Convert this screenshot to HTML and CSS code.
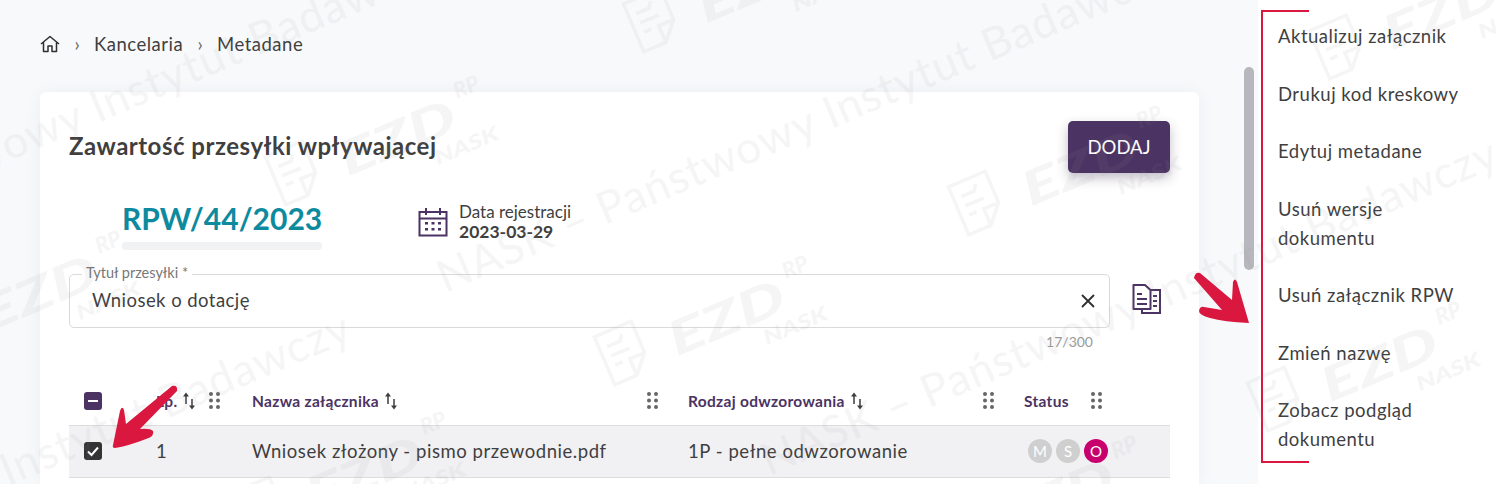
FILE: index.html
```html
<!DOCTYPE html>
<html lang="pl">
    <head>
        <meta charset="UTF-8">
        <meta name="viewport" content="width=device-width, initial-scale=1.0">
        <title>Metadane</title>
        <link rel="stylesheet" href="styles.css">
    </head>
    <body>
        <svg class="defs" width="0" height="0">
            <symbol id="dots" viewBox="0 0 11 17">
                <circle cx="2" cy="2" r="2"/><circle cx="9" cy="2" r="2"/>
                <circle cx="2" cy="8.5" r="2"/><circle cx="9" cy="8.5" r="2"/>
                <circle cx="2" cy="15" r="2"/><circle cx="9" cy="15" r="2"/>
            </symbol>
            <symbol id="sort" viewBox="0 0 14 18">
                <path d="M4 12V3M10 7V15" fill="none" stroke="#3d3d3d" stroke-width="1.500"/>
                <path d="M1 4.500 4 .5l3 4ZM7 13.500l3 4 3-4Z" fill="#3d3d3d"/>
            </symbol>
            <defs>
                <g id="logo">
                    <text class="wm-ezd" transform="translate(-62 66) rotate(-23)" textLength="122" lengthAdjust="spacingAndGlyphs">EZD</text>
                    <text class="wm-rp" transform="translate(3 7) rotate(-23)" textLength="26" lengthAdjust="spacingAndGlyphs">RP</text>
                    <text class="wm-nask" transform="translate(3 65) rotate(-23)" textLength="68" lengthAdjust="spacingAndGlyphs">NASK</text>
                    <g transform="translate(-172 86) rotate(-23)" fill="none" stroke="#999" stroke-width="3.500">
                        <path d="M-20-26H20V8L4 26H-20ZM20 8H4V26M-12-12H2L6-18M-12-2H8M-12 8H-4"/>
                    </g>
                </g>
            </defs>
        </svg>

        <div class="app">
            <main class="content">
                <nav class="crumbs">
                    <svg class="home" viewBox="0 0 20 18" width="20" height="18">
                        <path d="M1 9 10 1.500 19 9M3.500 7.500V16.500H8V11h4v5.500h4.500V7.500" fill="none" stroke="#2f2f2f" stroke-width="1.500" stroke-linejoin="round"/>
                    </svg>
                    <span class="sep">›</span>
                    <a class="crumb">Kancelaria</a>
                    <span class="sep">›</span>
                    <a class="crumb">Metadane</a>
                </nav>

                <section class="card">
                    <header class="card-head">
                        <h1 class="card-title">Zawartość przesyłki wpływającej</h1>
                        <button class="btn-add">DODAJ</button>
                    </header>

                    <div class="meta">
                        <div class="rpw">
                            <div class="rpw-no">RPW/44/2023</div>
                            <div class="rpw-bar"></div>
                        </div>
                        <div class="reg">
                            <svg viewBox="0 0 30 30" width="30" height="30">
                                <path d="M1.500 5H28.500V28.500H1.500ZM1.500 11.500H28.500M8 1V8M22 1V8" fill="none" stroke="#4b3363" stroke-width="2"/>
                                <path d="M7 15h3v2.500H7ZM13.500 15h3v2.500h-3ZM20 15h3v2.500h-3ZM7 21h3v2.500H7ZM13.500 21h3v2.500h-3ZM20 21h3v2.500h-3Z" fill="#4b3363"/>
                            </svg>
                            <div>
                                <div class="reg-label">Data rejestracji</div>
                                <div class="reg-date">2023-03-29</div>
                            </div>
                        </div>
                    </div>

                    <div class="title-row">
                        <div class="field">
                            <span class="field-label">Tytuł przesyłki *</span>
                            <span class="field-value">Wniosek o dotację</span>
                            <svg viewBox="0 0 16 16" width="16" height="16">
                                <path d="M2 2 14 14M14 2 2 14" stroke="#2f2f2f" stroke-width="1.800"/>
                            </svg>
                        </div>
                        <svg class="copy" viewBox="0 0 30 30" width="30" height="30">
                            <path d="M10 6H28V29H10Z" fill="#fff" stroke="#4b3363" stroke-width="2"/>
                            <path d="M21 12H25M21 17H25M21 22H25" stroke="#4b3363" stroke-width="2"/>
                            <path d="M1.500 1H13L18.500 6V25H1.500Z" fill="#fff" stroke="#4b3363" stroke-width="2" stroke-linejoin="round"/>
                            <path d="M5 10H10M5 15H15M5 20H15" stroke="#4b3363" stroke-width="2"/>
                        </svg>
                    </div>
                    <div class="counter">17/300</div>

                    <div class="table">
                        <div class="cell head check-cell"><span class="box box-mixed"></span></div>
                        <div class="cell head lp">
                            <span>Lp.</span>
                            <svg class="sort"><use href="#sort"/></svg>
                            <svg class="dots"><use href="#dots"/></svg>
                        </div>
                        <div class="cell head">
                            <span>Nazwa załącznika</span>
                            <svg class="sort"><use href="#sort"/></svg>
                            <svg class="dots"><use href="#dots"/></svg>
                        </div>
                        <div class="cell head">
                            <span>Rodzaj odwzorowania</span>
                            <svg class="sort"><use href="#sort"/></svg>
                            <svg class="dots"><use href="#dots"/></svg>
                        </div>
                        <div class="cell head status">
                            <span>Status</span>
                            <svg class="dots"><use href="#dots"/></svg>
                        </div>

                        <div class="cell row check-cell">
                            <span class="box box-on">
                                <svg viewBox="0 0 18 18" width="18" height="18"><path d="M4 9.500 7.500 13 14 5.500" fill="none" stroke="#fff" stroke-width="2"/></svg>
                            </span>
                        </div>
                        <div class="cell row">1</div>
                        <div class="cell row">Wniosek złożony - pismo przewodnie.pdf</div>
                        <div class="cell row">1P - pełne odwzorowanie</div>
                        <div class="cell row badges">
                            <span class="badge">M</span>
                            <span class="badge">S</span>
                            <span class="badge badge-on">O</span>
                        </div>
                    </div>
                </section>
                <div class="thumb"></div>
            </main>

            <aside class="actions">
                <a class="action">Aktualizuj załącznik</a>
                <a class="action">Drukuj kod kreskowy</a>
                <a class="action">Edytuj metadane</a>
                <a class="action">Usuń wersje dokumentu</a>
                <a class="action">Usuń załącznik RPW</a>
                <a class="action">Zmień nazwę</a>
                <a class="action">Zobacz podgląd dokumentu</a>
                <div class="bracket"></div>
            </aside>
        </div>

        <!-- znak wodny -->
        <svg class="watermark" width="1496" height="484" viewBox="0 0 1496 484">
            <g class="wm-text">
                <text transform="translate(-288 287) rotate(-23)">NASK – Państwowy Instytut Badawczy</text>
                <text transform="translate(445 293) rotate(-23)">NASK – Państwowy Instytut Badawczy</text>
                <text transform="translate(769 476) rotate(-23)">NASK – Państwowy Instytut Badawczy</text>
                <text transform="translate(-378 650) rotate(-23)">NASK – Państwowy Instytut Badawczy</text>
            </g>
            <use href="#logo" x="466" y="87"/>
            <use href="#logo" x="795" y="267"/>
            <use href="#logo" x="1149" y="117"/>
            <use href="#logo" x="1448" y="313"/>
            <use href="#logo" x="108" y="242"/>
            <use href="#logo" x="433" y="423"/>
            <use href="#logo" x="1510" y="-39"/>
            <use href="#logo" x="824" y="-66"/>
            <use href="#logo" x="1124" y="447"/>
        </svg>

        <!-- strzalki -->
        <svg class="arrows" width="1496" height="484" viewBox="0 0 1496 484">
            <path d="M172 386Q178 385 177 391L140 429Q150 428 153 431Q155 436 146 439Q128 446 115 448Q112 448 113 445L120 411Q122 405 124 410L126 424Z"/>
            <path d="M1194 278Q1195 272 1200 273L1232 300L1233 282Q1235 277 1237 282L1249 323Q1224 322 1210 318Q1199 315 1199 311Q1200 306 1204 307L1222 310Z"/>
        </svg>
    </body>
</html>
```
FILE: styles.css
```css
* {
    box-sizing: border-box;
}
body {
    margin: 0;
    height: 484px;
    overflow: hidden;
    position: relative;
    background-color: #fff;
    color: #3f3f3f;
    font-family: Lato, "Noto Sans", sans-serif;
    font-size: 18.500px;
}
.defs {
    position: absolute;
}
.app {
    display: flex;
    height: 484px;
}
.content {
    position: relative;
    width: 1258px;
    flex: none;
    background-color: #f8f9fb;
    padding-left: 40px;
}
.crumbs {
    display: flex;
    align-items: center;
    height: 92px;
    padding-bottom: 4px;
}
.crumb {
    letter-spacing: .5px;
}
.sep {
    width: 34px;
    text-align: center;
    color: #666;
}
.card {
    width: 1159px;
    height: 392px;
    padding: 29px 29px 0;
    background-color: #fff;
    border-radius: 6px 6px 0 0;
    box-shadow: 0 0 18px rgba(40, 40, 70, .05);
}
.card-head {
    display: flex;
    justify-content: space-between;
    align-items: center;
    height: 52px;
}
.card-title {
    margin: 0 0 4px;
    font-size: 24px;
    font-weight: 700;
    letter-spacing: .5px;
}
.btn-add {
    width: 102px;
    height: 52px;
    border: none;
    border-radius: 5px;
    background-color: #4b3363;
    color: #fff;
    font-family: inherit;
    font-size: 18.500px;
    box-shadow: 0 5px 12px rgba(50, 40, 70, .3);
}
.meta {
    display: flex;
    align-items: flex-start;
    height: 101px;
    padding: 28px 0 0 53px;
}
.rpw {
    width: 200px;
}
.rpw-no {
    height: 41px;
    line-height: 35px;
    font-size: 30px;
    font-weight: 700;
    color: #0d8a9e;
    white-space: nowrap;
}
.rpw-bar {
    height: 8px;
    border-radius: 4px;
    background-color: #f1f2f4;
}
.reg {
    display: flex;
    align-items: center;
    gap: 11px;
    margin-left: 96px;
    margin-top: 1px;
}
.reg-label {
    font-size: 17px;
    line-height: 20px;
}
.reg-date {
    font-size: 17.500px;
    font-weight: 700;
    line-height: 20px;
}
.title-row {
    display: flex;
    align-items: center;
    gap: 22px;
}
.field {
    position: relative;
    display: flex;
    align-items: center;
    justify-content: space-between;
    width: 1041px;
    height: 54px;
    padding: 0 13px 0 22px;
    border: 1px solid #dadada;
    border-radius: 5px;
}
.field-label {
    position: absolute;
    left: 12px;
    top: -10px;
    padding: 0 4px;
    background-color: #fff;
    color: #777;
    font-size: 14.500px;
    line-height: 16px;
}
.field-value {
    letter-spacing: .45px;
    padding-bottom: 3px;
}
.copy {
    flex: none;
    margin-top: -5px;
}
.counter {
    width: 1024px;
    height: 52px;
    padding-top: 5px;
    text-align: right;
    color: #9a9a9a;
    font-size: 14px;
}
.table {
    display: grid;
    grid-template-columns: 87px 96px 436px 336px 146px;
    grid-template-rows: 46px 52px;
    width: 1101px;
}
.cell {
    display: flex;
    align-items: center;
    border-bottom: 1px solid #dcdcdc;
    white-space: nowrap;
}
.head {
    gap: 5px;
    padding-right: 30px;
    padding-bottom: 4px;
    color: #4b3363;
    font-size: 15.500px;
    font-weight: 700;
    letter-spacing: .3px;
}
.lp {
    padding-right: 32px;
}
.status {
    padding-right: 68px;
}
.row {
    padding-bottom: 2px;
    background-color: #f1f0f3;
    letter-spacing: .55px;
}
.check-cell {
    padding-left: 15px;
    padding-right: 0;
}
.box {
    display: block;
    width: 18px;
    height: 18px;
    border-radius: 3px;
}
.box svg {
    display: block;
}
.box-mixed {
    position: relative;
    background-color: #4b3363;
}
.box-mixed::after {
    content: "";
    position: absolute;
    left: 4px;
    right: 4px;
    top: 8px;
    height: 2px;
    background-color: #fff;
}
.box-on {
    background-color: #333;
}
.sort {
    width: 14px;
    height: 18px;
    flex: none;
}
.dots {
    width: 11px;
    height: 17px;
    flex: none;
    margin-left: auto;
    fill: #666;
}
.badges {
    gap: 4px;
    padding-left: 4px;
}
.badge {
    width: 24px;
    height: 24px;
    border-radius: 50%;
    background-color: #cfcfcf;
    color: #fff;
    font-size: 15px;
    line-height: 24px;
    text-align: center;
    letter-spacing: 0;
}
.badge-on {
    background-color: #c8006e;
}
.thumb {
    position: absolute;
    left: 1244px;
    top: 67px;
    width: 10px;
    height: 203px;
    border-radius: 5px;
    background-color: #b8b7bd;
}
.actions {
    position: relative;
    flex: 1;
    padding: 8px 20px 0;
    background-color: #fff;
}
.action {
    display: block;
    padding: 14.250px 0;
    line-height: 29px;
    letter-spacing: .5px;
}
.bracket {
    position: absolute;
    left: 3px;
    top: 10px;
    width: 48px;
    height: 453px;
    border: 2px solid #d9173f;
    border-right: none;
}
.watermark {
    position: absolute;
    left: 0;
    top: 0;
    pointer-events: none;
    overflow: hidden;
    fill: #999;
    opacity: .085;
}
.wm-text text {
    font-size: 44.500px;
    letter-spacing: 1px;
}
.wm-ezd {
    font-size: 47px;
    font-weight: 900;
    font-style: italic;
    text-anchor: middle;
}
.wm-rp {
    font-size: 22px;
    font-weight: 900;
    font-style: italic;
    text-anchor: middle;
}
.wm-nask {
    font-size: 20px;
    font-weight: 900;
    font-style: italic;
    text-anchor: middle;
}
.arrows {
    position: absolute;
    left: 0;
    top: 0;
    pointer-events: none;
    fill: #d9173f;
}
```
